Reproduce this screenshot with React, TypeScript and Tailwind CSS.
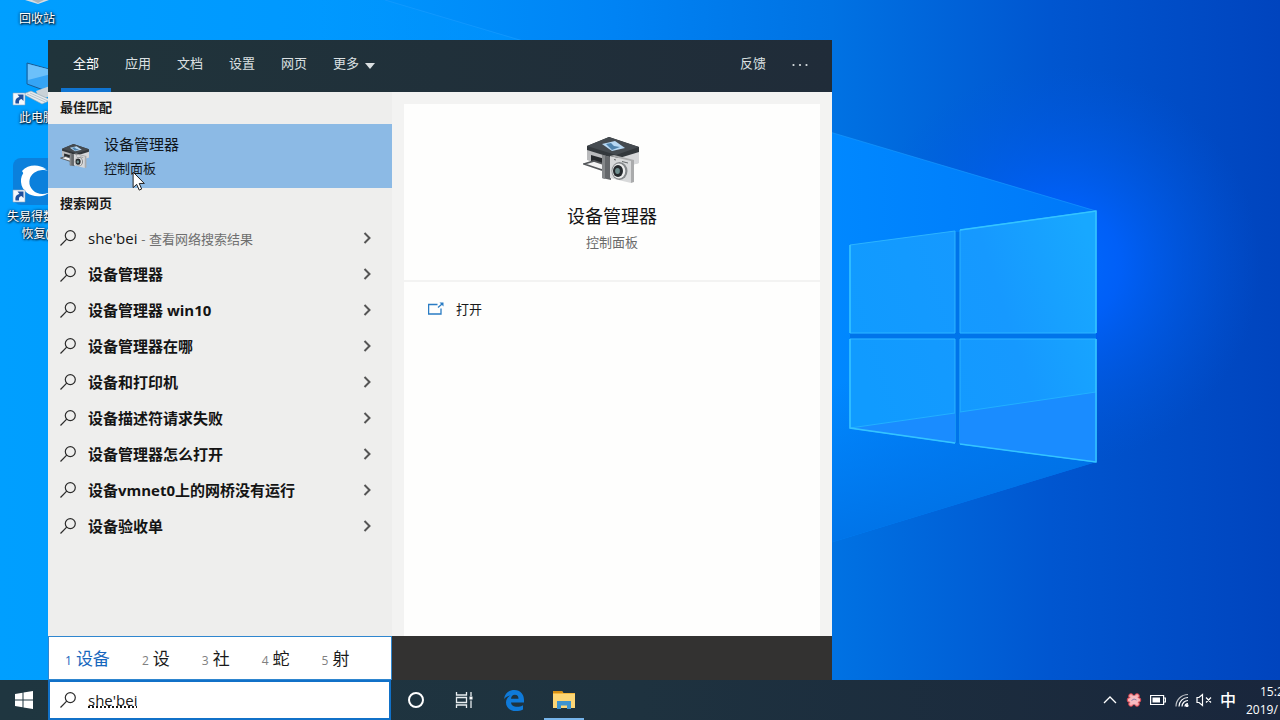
import { ReactNode } from "react";
import clsx from "clsx";

const tabs = ["全部", "应用", "文档", "设置", "网页"];

const suggestions = [
  "设备管理器",
  "设备管理器 win10",
  "设备管理器在哪",
  "设备和打印机",
  "设备描述符请求失败",
  "设备管理器怎么打开",
  "设备vmnet0上的网桥没有运行",
  "设备验收单",
];

const candidates = ["设备", "设", "社", "蛇", "射"];

const Wallpaper = () => (
  <svg
    className="absolute inset-0 h-full w-full"
    viewBox="0 0 1280 720"
    preserveAspectRatio="xMidYMid slice"
    aria-hidden="true"
  >
    <defs>
      <linearGradient id="base" x1="0" y1="0" x2="1" y2="0">
        <stop offset="0" stopColor="#009fff" />
        <stop offset="0.25" stopColor="#0098ff" />
        <stop offset="0.48" stopColor="#0083f4" />
        <stop offset="0.65" stopColor="#0072e3" />
        <stop offset="0.82" stopColor="#0056d0" />
        <stop offset="1" stopColor="#0044be" />
      </linearGradient>
      <radialGradient id="glow" gradientUnits="userSpaceOnUse" cx="1060" cy="265" r="200">
        <stop offset="0" stopColor="#006aff" />
        <stop offset="0.3" stopColor="#0062ff" stopOpacity="0.85" />
        <stop offset="1" stopColor="#0058e0" stopOpacity="0" />
      </radialGradient>
      <linearGradient id="beam" gradientUnits="userSpaceOnUse" x1="400" y1="0" x2="1096" y2="0">
        <stop offset="0" stopColor="#009aff" stopOpacity="0.3" />
        <stop offset="0.62" stopColor="#0088ff" />
        <stop offset="1" stopColor="#0078f8" />
      </linearGradient>
      <linearGradient id="shade" gradientUnits="userSpaceOnUse" x1="850" y1="380" x2="900" y2="530">
        <stop offset="0" stopColor="#0072e6" stopOpacity="0" />
        <stop offset="1" stopColor="#0072e6" stopOpacity="0.95" />
      </linearGradient>
      <linearGradient id="pane" gradientUnits="userSpaceOnUse" x1="850" y1="340" x2="1096" y2="260">
        <stop offset="0" stopColor="#109bff" />
        <stop offset="0.6" stopColor="#1699ff" />
        <stop offset="1" stopColor="#18a8ff" />
      </linearGradient>
    </defs>
    <rect width="1280" height="720" fill="url(#base)" />
    <rect x="840" y="60" width="440" height="440" fill="url(#glow)" />
    <path d="M385 0 1096 211V462L300 704V0Z" fill="url(#beam)" />
    <path d="M385 0 1096 211V462L300 704V0Z" fill="url(#shade)" />
    <path d="M385 0 1096 211" stroke="#1a9cff" strokeOpacity="0.6" />
    <path d="M955 232H960V443H955ZM850 333.500H1096V338.500H850Z" fill="#0074ea" />
    <g fill="url(#pane)" stroke="#2cb4ff">
      <path d="M850 245 955 231V333H850Z" />
      <path d="M960 230 1096 211V333H960Z" />
      <path d="M850 339H955V443L850 428Z" />
      <path d="M960 339H1096V462L960 444Z" />
    </g>
    <path d="M850 428 955 413V443ZM960 412 1096 392V462L960 444Z" fill="#1a8cff" />
    <path d="M850 428 955 413M960 412 1096 392" stroke="#22b0ff" />
    <path
      d="M850 333V245M850 339V428L955 443M960 230 1096 211V333M1096 339V462L960 444"
      fill="none"
      stroke="#34c4ff"
      strokeWidth="1.500"
    />
  </svg>
);

const ShortcutArrow = () => (
  <>
    <path d="M13 33h12v12H13z" fill="#f4f8fc" stroke="#8aa6c0" strokeWidth="0.6" />
    <path d="M15.500 43.500c-.5-4 1-6 4-6.500l-2-2.500H23.500v6.500l-2-2c-2 .5-2.800 1.500-2.500 4.500Z" fill="#1f4f9c" />
  </>
);

const DesktopLabel = ({ children }: { children: ReactNode }) => (
  <span className="block text-center text-xs leading-[17px] whitespace-nowrap text-white [text-shadow:1px_1px_2px_#000,0_0_3px_#002]">
    {children}
  </span>
);

const DesktopIcons = () => (
  <div className="relative flex w-[74px] flex-col">
    <div className="h-[60px]">
      <svg className="h-[10px] w-full" viewBox="0 0 74 10" aria-hidden="true">
        <path d="M25 0h24l-11 4Z" fill="#d6dde2" />
        <path d="M32 0h12l-6 3Z" fill="#aab4bb" />
      </svg>
      <DesktopLabel>回收站</DesktopLabel>
    </div>
    <div className="h-[97px]">
      <svg className="h-[49px] w-full" viewBox="0 0 74 49" aria-hidden="true">
        <path d="M27 3 60 12V36L27 24Z" fill="#35a4f5" stroke="#1b5c94" />
        <path d="M28 4 59 12 28 20Z" fill="#6cc0fa" />
        <path d="M36 31l14-5v10l-10 4Z" fill="#c9d2d8" />
        <path d="M23 34l8-3 20 9-9 4Z" fill="#e4eaee" stroke="#8fa1ad" strokeWidth="0.6" />
        <path d="M27 34l18 8M30 33l18 8" stroke="#9aa9b3" strokeWidth="0.6" />
        <ShortcutArrow />
      </svg>
      <DesktopLabel>此电脑</DesktopLabel>
    </div>
    <div>
      <svg className="h-[51px] w-full" viewBox="0 0 74 51" aria-hidden="true">
        <rect x="13" y="1" width="48" height="47" rx="8" fill="#0b80dc" />
        <path d="M53 18A13 12 0 1 0 52 33C43 44 22 40 21 25 20 11 38 3 53 18Z" fill="#fff" />
        <path d="M22 14c6-7 17-7 24-2-10-1-16 2-21 7Z" fill="#fff" />
        <ShortcutArrow />
      </svg>
      <DesktopLabel>失易得数据</DesktopLabel>
      <DesktopLabel>恢复()</DesktopLabel>
    </div>
  </div>
);

const DeviceIcon = ({ className }: { className: string }) => (
  <svg className={className} viewBox="0 0 58 48" aria-hidden="true">
    <path d="M4 10v14l24 9 28-6V12L30 18Z" fill="#b9babc" />
    <path d="M30 19 56 12v15l-26 8Z" fill="#d6d7d9" />
    <path d="M4 10 26 1l30 10v5L33 23 4 14Z" fill="#33383c" />
    <path d="M4 10 26 1l30 10-23 8Z" fill="#454b50" />
    <path d="M19 8l13-3 10 7-13 3Z" fill="#b7d8f3" />
    <path d="M23 8l5-1 3 3 6 1-8 3Z" fill="#4f83ad" />
    <path d="M8 19l14 4v7L8 26Z" fill="#26292c" />
    <path d="M1 28l10-3 12 4-4 5Z" fill="#f3f3f3" stroke="#55585b" strokeWidth="1.800" />
    <path d="M19 19l9 2v23l-9-2Z" fill="#65686b" />
    <path d="M19 19l3 1v23l-3-1Z" fill="#85888a" />
    <path d="M27 20l21 5v22l-21-5Z" fill="#d8d9da" />
    <path d="M27 20l4-1 20 5-3 1ZM48 25l3-1v22l-3 1Z" fill="#aaabac" />
    <path d="M31 23.500l2 .5M39 25.500l6 1.500" stroke="#66696b" />
    <ellipse cx="36.500" cy="35" rx="8" ry="9" fill="#85888a" />
    <ellipse cx="35.800" cy="35" rx="6.500" ry="7.500" fill="#ececec" />
    <ellipse cx="35" cy="35" rx="5" ry="6" fill="#25292c" />
    <ellipse cx="34.500" cy="35" rx="2.400" ry="3" fill="#6e8d8d" />
  </svg>
);

const SearchIcon = () => (
  <svg className="h-4 w-4 shrink-0" viewBox="0 0 16 16" fill="none" stroke="#2b2b2b" strokeWidth="1.200" aria-hidden="true">
    <circle cx="10.300" cy="5.600" r="5" />
    <path d="M6.700 9.200.5 15.500" />
  </svg>
);

const Chevron = () => (
  <svg className="h-3 w-2 shrink-0" viewBox="0 0 8 12" fill="none" stroke="#555" strokeWidth="2" aria-hidden="true">
    <path d="M1.500 1 6.500 6l-5 5" />
  </svg>
);

const SectionTitle = ({ children }: { children: ReactNode }) => (
  <h2 className="flex h-8 items-center pl-3 text-[13px] font-bold text-[#1a1a1a]">{children}</h2>
);

const ResultRow = ({ children }: { children: ReactNode }) => (
  <li>
    <button className="flex h-9 w-full items-center gap-3 pr-[21px] pl-3 text-left">
      <SearchIcon />
      <span className="flex-1 text-[15px] whitespace-nowrap text-[#141414]">{children}</span>
      <Chevron />
    </button>
  </li>
);

const PanelHeader = () => (
  <header className="flex h-[52px] shrink-0 items-center justify-between bg-gradient-to-r from-[#20343b] to-[#202c39] pr-6 pl-[13px] text-[13px] text-[#dbe0e2]">
    <nav className="flex h-full gap-0.5">
      {tabs.map((tab, i) => (
        <button
          key={tab}
          className={clsx(
            "border-y-4 border-t-transparent px-3 pb-1",
            i === 0 ? "border-b-[#0f74d1] text-white" : "border-b-transparent"
          )}
        >
          {tab}
        </button>
      ))}
      <button className="flex items-center gap-1.5 px-3 pb-1">
        更多
        <svg className="mt-1 h-1.5 w-2.5" viewBox="0 0 10 6" fill="currentColor" aria-hidden="true">
          <path d="M0 0h10L5 6Z" />
        </svg>
      </button>
    </nav>
    <div className="flex items-center gap-[26px] pb-1">
      <button>反馈</button>
      <button aria-label="选项">
        <svg className="h-4 w-4" viewBox="0 0 16 16" fill="currentColor" aria-hidden="true">
          <circle cx="1.500" cy="9" r="1.100" />
          <circle cx="8" cy="9" r="1.100" />
          <circle cx="14.500" cy="9" r="1.100" />
        </svg>
      </button>
    </div>
  </header>
);

const Results = () => (
  <section className="w-[344px] shrink-0 bg-[#eeeeed]">
    <SectionTitle>最佳匹配</SectionTitle>
    <button className="flex h-16 w-full items-center gap-[14px] bg-[#8cbae5] pl-3 text-left text-[#10161c]">
      <DeviceIcon className="h-7 w-[30px]" />
      <span className="flex flex-col">
        <span className="text-[15px] leading-6">设备管理器</span>
        <span className="text-[13px] leading-6">控制面板</span>
      </span>
    </button>
    <SectionTitle>搜索网页</SectionTitle>
    <ul>
      <ResultRow>
        she'bei <span className="text-[13px] text-[#6f6f6f]">- 查看网络搜索结果</span>
      </ResultRow>
      {suggestions.map((text) => (
        <ResultRow key={text}>
          <b>{text}</b>
        </ResultRow>
      ))}
    </ul>
  </section>
);

const Preview = () => (
  <section className="flex flex-1 flex-col gap-0.5 bg-[#f3f3f2] px-3 pt-3">
    <div className="flex h-[176px] flex-col items-center bg-[#fefefd] pt-8">
      <DeviceIcon className="h-12 w-[58px]" />
      <h1 className="mt-[18px] text-lg leading-7 text-[#141414]">设备管理器</h1>
      <p className="mt-0.5 text-[13px] leading-5 text-[#6a6a6a]">控制面板</p>
    </div>
    <div className="flex-1 bg-[#fefefd] px-6 pt-4">
      <button className="flex h-6 items-center gap-3 text-[13px] text-[#1a1a1a]">
        <svg className="h-4 w-4" viewBox="0 0 16 16" fill="none" stroke="#2a7cc4" strokeWidth="1.300" aria-hidden="true">
          <path d="M9.500 2.500H.6v9.500h12.400V6.500" />
          <path d="M10 5.500 14 2" />
          <path d="M11.500.5h4v4Z" fill="#2a7cc4" stroke="none" />
        </svg>
        打开
      </button>
    </div>
  </section>
);

const CandidateBar = () => (
  <div className="flex h-11 shrink-0 bg-[#333231]">
    <div className="flex w-[344px] items-center gap-8 border border-[#2f86cf] bg-white pt-0.5 pl-4">
      {candidates.map((word, i) => (
        <button
          key={word}
          className={clsx("flex items-baseline gap-1 whitespace-nowrap", i === 0 ? "text-[#1767bd]" : "text-[#1a1a1a]")}
        >
          <span className={clsx("text-xs", i > 0 && "text-[#808080]")}>{i + 1}</span>
          <span className="text-[17px]">{word}</span>
        </button>
      ))}
    </div>
  </div>
);

const Tray = () => (
  <div className="flex h-full items-center text-white">
    <button aria-label="显示隐藏的图标">
      <svg className="h-4 w-4" viewBox="0 0 16 16" fill="none" stroke="currentColor" strokeWidth="1.300" aria-hidden="true">
        <path d="M2 11 8 5l6 6" />
      </svg>
    </button>
    <svg className="ml-2 h-4 w-4" viewBox="0 0 16 16" aria-hidden="true">
      <g fill="#f9b0b2" stroke="#dc4450">
        <circle cx="5" cy="4" r="2.300" />
        <circle cx="11" cy="4" r="2.300" />
        <circle cx="3.500" cy="8" r="2.300" />
        <circle cx="12.500" cy="8" r="2.300" />
        <circle cx="5" cy="12" r="2.300" />
        <circle cx="11" cy="12" r="2.300" />
      </g>
      <circle cx="8" cy="8" r="4.500" fill="#f7bcc1" />
      <path d="M5.500 8.500 8 7l2.500 1" stroke="#8c7fa8" fill="none" />
    </svg>
    <svg className="ml-2 h-4 w-4" viewBox="0 0 16 16" fill="none" stroke="currentColor" aria-hidden="true">
      <path d="M.6 3.500h13v9H.6zM14 6h1.500v4H14" strokeWidth="1.200" />
      <path d="M2.500 5.500h7.500v5H2.500z" fill="currentColor" stroke="none" />
    </svg>
    <svg className="ml-2 h-4 w-4" viewBox="0 0 16 16" fill="none" stroke="currentColor" strokeWidth="1.200" aria-hidden="true">
      <path d="M2 14.500A12 12 0 0 1 14 2.500" opacity="0.700" />
      <path d="M5 14.500a9 9 0 0 1 9-9M8 14.500a6 6 0 0 1 6-6M11 14.500a3 3 0 0 1 3-3" />
      <circle cx="13" cy="13.500" r="1" fill="currentColor" />
    </svg>
    <svg className="ml-1.5 h-4 w-4" viewBox="0 0 16 16" fill="none" stroke="currentColor" strokeWidth="1.200" aria-hidden="true">
      <path d="M1 5.500h2L6.500 2.500v11L3 10.500H1ZM10 5.500l5 5M15 5.500l-5 5" />
    </svg>
    <button className="ml-2 text-base font-medium">中</button>
    <div className="ml-2.5 flex h-full w-[34px] flex-col justify-center overflow-hidden pt-0.5 text-xs leading-[18px] whitespace-nowrap">
      <span className="pl-3.5">15:2</span>
      <span>2019/</span>
    </div>
  </div>
);

const Taskbar = () => (
  <footer className="relative flex h-10 shrink-0 items-center bg-gradient-to-r from-[#1f3640] via-[#1e323f] to-[#19263c]">
    <button className="flex h-full w-12 items-center justify-center" aria-label="开始">
      <svg className="h-[18px] w-[18px]" viewBox="0 0 18 18" fill="#fff" aria-hidden="true">
        <path d="M0 3l7.500-1.200v6.700H0ZM8.500 1.600 18 0v8.500H8.500ZM0 9.500h7.500v6.700L0 15ZM8.500 9.500H18V18l-9.500-1.600Z" />
      </svg>
    </button>
    <label className="flex h-10 w-[343px] items-center gap-3 border-2 border-[#1171c8] bg-white pl-2.5">
      <SearchIcon />
      <input
        className="w-full bg-transparent text-[15px] text-[#1a1a1a] underline decoration-dotted decoration-2 underline-offset-1 outline-none"
        aria-label="搜索"
        spellCheck={false}
        defaultValue="she'bei"
      />
    </label>
    <button className="ml-px flex h-full w-12 items-center justify-center" aria-label="Cortana">
      <svg className="h-[18px] w-[18px]" viewBox="0 0 18 18" fill="none" stroke="#fff" strokeWidth="2" aria-hidden="true">
        <circle cx="9" cy="9" r="7" />
      </svg>
    </button>
    <button className="flex h-full w-12 items-center justify-center" aria-label="任务视图">
      <svg className="h-[18px] w-[18px]" viewBox="0 0 18 18" fill="none" stroke="#e8edf0" strokeWidth="1.300" aria-hidden="true">
        <path d="M1.500 1v3h10V1M1.500 17v-3h10v3M1.500 6.500h10v5h-10zM16 1v4M16 9.500V17" />
        <path d="M14.500 5.500h3v3h-3z" fill="#fff" stroke="none" />
      </svg>
    </button>
    <button className="flex h-full w-[52px] items-center justify-center" aria-label="Edge">
      <svg className="h-[22px] w-[22px]" viewBox="0 0 22 22" aria-hidden="true">
        <path
          d="M1 10C2 4 6 1 11.500 1 17.500 1 21 5.500 21 11v2.500H8c.3 3 3 4.300 6 4.300 2.300 0 4.300-.6 6-1.600v4.300c-2 1-4.300 1.500-7 1.500C7 22 3 18.500 3 13.500 3 10.500 4.500 8 7.500 6.500 5 6.800 2.800 8 1 10ZM8 9.700h7.500c0-2.400-1.300-3.900-3.600-3.900-2.200 0-3.600 1.600-3.900 3.900Z"
          fill="#0f7ad9"
          fillRule="evenodd"
        />
      </svg>
    </button>
    <button className="flex h-full w-12 flex-col items-center justify-between pt-2.5" aria-label="文件资源管理器">
      <svg className="h-5 w-[22px]" viewBox="0 0 22 20" aria-hidden="true">
        <path d="M0 1h9l1.500 2H22v15H0Z" fill="#f5b73c" />
        <path d="M0 1h9l1 2H0Z" fill="#d68f14" />
        <path d="M0 4h22v14H0Z" fill="#fdd675" />
        <path d="M4 19v-8h14v8h-4v-3.500H8V19Z" fill="#3d93cf" />
      </svg>
      <span className="h-0.5 w-10 bg-[#76b4ea]" />
    </button>
    <div className="ml-auto">
      <Tray />
    </div>
  </footer>
);

export default function App() {
  return (
    <div className="relative flex min-h-screen flex-col overflow-hidden font-['Open_Sans','Noto_Sans_CJK_SC',sans-serif]">
      <Wallpaper />
      <main className="relative flex-1">
        <DesktopIcons />
        <div className="absolute top-10 bottom-0 left-12 flex w-[784px] max-w-[calc(100%-48px)] flex-col">
          <PanelHeader />
          <div className="flex flex-1">
            <Results />
            <Preview />
          </div>
          <CandidateBar />
        </div>
        <svg className="absolute top-[171px] left-[132px] h-5 w-[14px]" viewBox="0 0 12 18" aria-hidden="true">
          <path d="M.7 1v14l3.200-3 2.300 5.200 2.200-1L6.200 11.200h4.600Z" fill="#fff" stroke="#222" strokeWidth="0.900" />
        </svg>
      </main>
      <Taskbar />
    </div>
  );
}
